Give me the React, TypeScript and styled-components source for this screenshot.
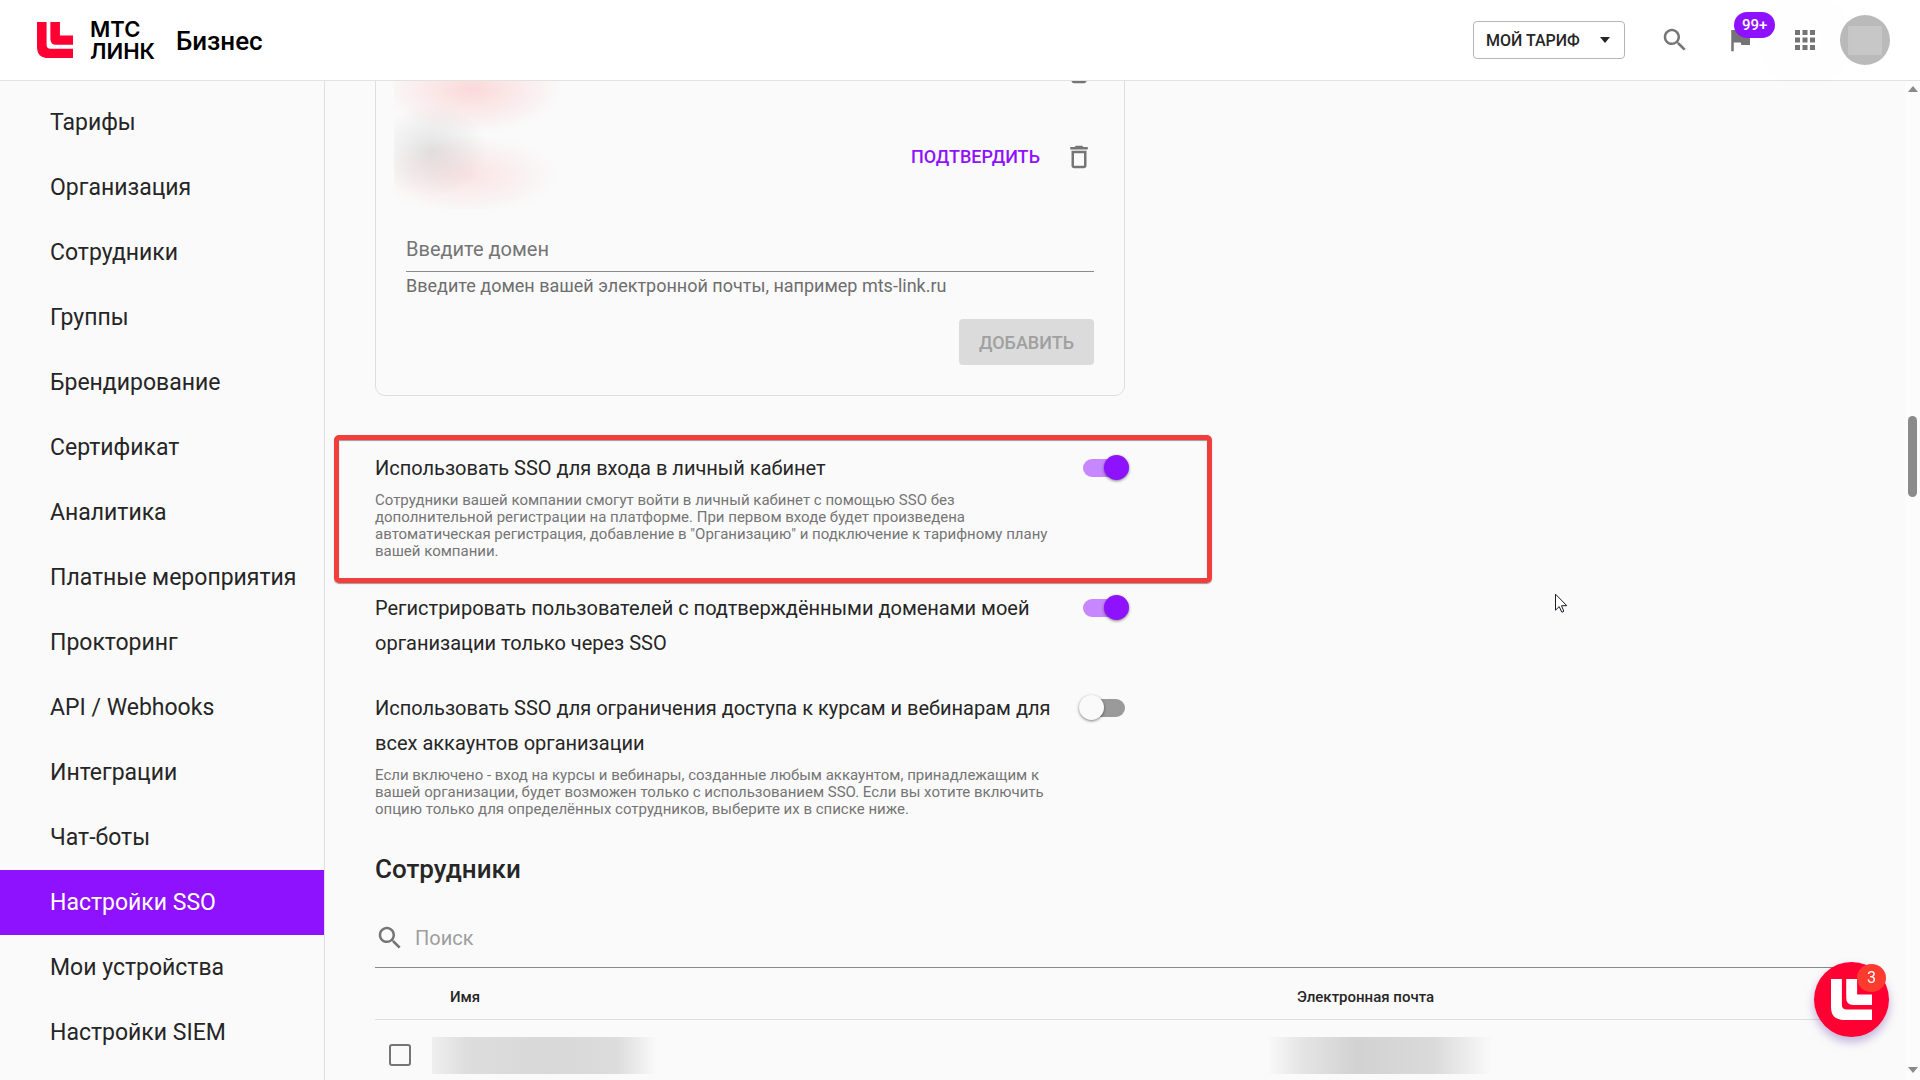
import React, { useState } from "react";
import styled, { createGlobalStyle, css } from "styled-components";

const GlobalStyle = createGlobalStyle`
  *, *::before, *::after { box-sizing: border-box; }
  body {
    margin: 0;
    background: #fafafa;
    color: #262626;
    font-family: Roboto, "Liberation Sans", sans-serif;
  }
  button, input { font-family: inherit; }
`;

const purple = "#8f12ff";
const grey = "#757575";

const Page = styled.div`
  display: flex;
  flex-direction: column;
  height: 100vh;
  overflow: hidden;
`;

/* ---------- Header ---------- */

const Header = styled.header`
  display: flex;
  flex: none;
  align-items: center;
  justify-content: space-between;
  height: 81px;
  padding: 0 30px 0 37px;
  border-bottom: 1px solid #e2e2e2;
  background: #fff;
`;

const Brand = styled.a`
  display: flex;
  align-items: center;
  gap: 17px;
  color: #000;
  text-decoration: none;
`;

const BrandName = styled.span`
  font: 600 22px/22px Inter, "Liberation Sans", sans-serif;
`;

const Product = styled.span`
  margin-left: 4px;
  padding-top: 2px;
  font-size: 26px;
  line-height: 30px;
  font-weight: 500;
`;

const Tools = styled.div`
  display: flex;
  align-items: center;
  gap: 25px;
`;

const PlanButton = styled.button`
  display: flex;
  align-items: center;
  justify-content: space-between;
  width: 152px;
  height: 38px;
  margin-right: 10px;
  padding: 0 14px 0 12px;
  border: 1px solid #b5b5b5;
  border-radius: 4px;
  background: #fff;
  color: #262626;
  font-size: 16px;
  font-weight: 500;
`;

const IconButton = styled.button<{ $halo?: boolean }>`
  position: relative;
  display: flex;
  padding: 0;
  border: 0;
  border-radius: 50%;
  background: none;
  color: ${grey};
  ${(p) => p.$halo && css`
    margin-right: -5px;
    box-shadow: 0 0 24px 28px rgba(143, 18, 255, 0.01);
  `}
`;

const FlagSlot = styled.div`
  display: flex;
  margin: 0 10px;
`;

const Counter = styled.span`
  position: absolute;
  top: -13px;
  left: 9px;
  padding: 0 8px;
  border-radius: 13px;
  background: ${purple};
  color: #fff;
  font-size: 15px;
  line-height: 26px;
  font-weight: 500;
`;

const Avatar = styled.button`
  display: grid;
  place-items: center;
  width: 50px;
  height: 50px;
  padding: 0;
  border: 0;
  border-radius: 50%;
  background: #bababa;

  &::after {
    content: "";
    width: 34px;
    height: 29px;
    background: #c7c7c7;
  }
`;

/* ---------- Body ---------- */

const Body = styled.div`
  display: flex;
  flex: 1;
  min-height: 0;
`;

const Sidebar = styled.nav`
  display: flex;
  flex: none;
  flex-direction: column;
  width: 325px;
  padding-top: 9px;
  border-right: 1px solid #e0e0e0;
`;

const NavLink = styled.a<{ $active?: boolean }>`
  flex: none;
  padding-left: 50px;
  background: ${(p) => (p.$active ? purple : "transparent")};
  color: ${(p) => (p.$active ? "#fff" : "#262626")};
  font-size: 23px;
  line-height: 65px;
  text-decoration: none;
`;

const Content = styled.main`
  flex: 1;
  min-width: 0;
  overflow: hidden;
  padding: 0 50px;
`;

const Track = styled.div`
  display: flex;
  flex: none;
  flex-direction: column;
  align-items: center;
  justify-content: space-between;
  width: 15px;
  padding: 5px 0 7px;
  background: #fcfcfc;
  color: #8a8a8a;
`;

const Thumb = styled.div`
  width: 9px;
  height: 81px;
  margin-bottom: 246px;
  border-radius: 5px;
  background: #8b8b8b;
`;

/* ---------- Domains card ---------- */

const Card = styled.section`
  max-width: 750px;
  margin-top: -63px;
  padding: 10px 30px 30px;
  border: 1px solid #dedede;
  border-radius: 10px;
`;

const DomainList = styled.ul`
  position: relative;
  margin: 0;
  padding: 0;
  list-style: none;
`;

const DomainRow = styled.li`
  display: flex;
  align-items: center;
  justify-content: flex-end;
  height: 85px;
`;

const Redacted = styled.div`
  position: absolute;
  top: 0;
  left: -12px;
  width: 200px;
  height: 180px;
  background:
    radial-gradient(56px 46px at 38px 122px, rgba(150, 150, 150, 0.24), transparent),
    radial-gradient(90px 40px at 74px 146px, rgba(255, 120, 120, 0.17), transparent),
    radial-gradient(90px 44px at 78px 60px, rgba(255, 100, 100, 0.22), transparent);
`;

const ConfirmButton = styled.button`
  margin-right: 24px;
  padding: 0;
  border: 0;
  background: none;
  color: ${purple};
  font-size: 18px;
  font-weight: 500;
`;

const DomainInput = styled.input`
  display: block;
  width: 100%;
  height: 45px;
  margin-top: 28px;
  padding: 0;
  border: 0;
  border-bottom: 1px solid #8a8a8a;
  background: none;
  font-size: 20px;

  &::placeholder { color: ${grey}; opacity: 1; }
`;

const Helper = styled.label`
  display: block;
  padding-top: 4px;
  color: #6e6e6e;
  font-size: 18px;
  line-height: 20px;
`;

const AddButton = styled.button`
  display: block;
  width: 135px;
  height: 46px;
  margin: 23px 0 0 auto;
  border: 0;
  border-radius: 4px;
  background: #dbdbdb;
  color: #a0a0a0;
  font-size: 18px;
  font-weight: 500;
`;

/* ---------- Options ---------- */

const Options = styled.section`
  display: flex;
  flex-direction: column;
  gap: 30px;
  max-width: 755px;
  padding-top: 55px;
`;

const Option = styled.div`
  position: relative;
  display: flex;
  justify-content: space-between;
`;

const OptionText = styled.div`
  width: 690px;
`;

const OptionTitle = styled.label`
  display: block;
  font-size: 20px;
  line-height: 35px;
`;

const OptionNote = styled.p`
  margin: 6px 0 1px;
  color: ${grey};
  font-size: 15px;
  line-height: 17px;
`;

const Highlight = styled.div`
  position: absolute;
  inset: -16px -82px -22px -41px;
  border: 5px solid #f23d3d;
  border-radius: 5px;
  box-shadow: 0 1px 1px #999, inset 0 1px 1px #999;
  pointer-events: none;
`;

const Switch = styled.input`
  position: relative;
  width: 42px;
  height: 18px;
  margin: 8px 5px 0 0;
  appearance: none;
  border-radius: 9px;
  background: #9a9a9a;

  &::before {
    content: "";
    position: absolute;
    top: -4px;
    left: -4px;
    width: 25px;
    height: 25px;
    border-radius: 50%;
    background: #fafafa;
    box-shadow: 0 1px 3px rgba(0, 0, 0, 0.5);
  }

  &:checked { background: #c788ff; }
  &:checked::before { left: 21px; background: ${purple}; }
`;

/* ---------- Employees ---------- */

const Heading = styled.h2`
  margin: 34px 0 0;
  font-size: 26px;
  line-height: 32px;
  font-weight: 500;
`;

const SearchField = styled.label`
  display: flex;
  align-items: center;
  gap: 10px;
  height: 60px;
  margin-top: 23px;
  border-bottom: 1px solid #8a8a8a;
  color: ${grey};
`;

const SearchInput = styled.input`
  flex: 1;
  padding: 0;
  border: 0;
  background: none;
  font-size: 20px;

  &::placeholder { color: #9e9e9e; opacity: 1; }
`;

const Table = styled.table`
  width: 100%;
  table-layout: fixed;
  border-collapse: collapse;

  col:first-child { width: 57px; }
  col:last-child { width: 576px; }
`;

const HeadCell = styled.th`
  height: 51px;
  padding: 8px 18px 0;
  border-bottom: 1px solid #dedede;
  font-size: 15px;
  font-weight: 500;
  text-align: left;
`;

const Cell = styled.td`
  height: 72px;
  padding: 0;
`;

const CheckBox = styled.input`
  display: block;
  width: 22px;
  height: 22px;
  margin: 0 0 0 14px;
  appearance: none;
  border: 2px solid ${grey};
  border-radius: 3px;
`;

const RedactedName = styled.div`
  width: 225px;
  height: 37px;
  background: linear-gradient(90deg, #efefef, #dddddd 16%, #d8d8d8 52%, #dcdcdc 82%, #fafafa);
`;

const RedactedMail = styled(RedactedName)`
  margin-left: -12px;
  background: linear-gradient(90deg, #fafafa, #e4e4e4 16%, #d2d2d2 40%, #dadada 74%, #fafafa);
`;

/* ---------- Floating chat ---------- */

const ChatButton = styled.button`
  position: fixed;
  right: 31px;
  bottom: 43px;
  display: grid;
  place-items: center;
  width: 75px;
  height: 75px;
  padding: 0;
  border: 0;
  border-radius: 50%;
  background: #ff0032;
  color: #fff;
  box-shadow: 0 5px 10px rgba(90, 40, 160, 0.35);
`;

const ChatCount = styled.span`
  position: absolute;
  top: 2px;
  right: 3px;
  width: 29px;
  border-radius: 50%;
  background: #ff3b30;
  font-size: 16px;
  line-height: 28px;
`;

const Pointer = styled.svg`
  position: fixed;
  top: 593px;
  left: 1554px;
  pointer-events: none;
`;

/* ---------- Drawings ---------- */

const LinkMark = ({ size, color }: { size: number; color: string }) => (
  <svg width={size} height={size} viewBox="0 0 35 35" fill={color} aria-hidden="true">
    <path d="M0 0h9.3v22q0 4 4 4H35v9H11Q0 35 0 24z" />
    <path d="M13 0h9.3v13.2H35v9H19q-6 0-6-6z" />
  </svg>
);

const paths = {
  search:
    "M15.5 14h-.79l-.28-.27C15.41 12.59 16 11.11 16 9.5 16 5.91 13.09 3 9.5 3S3 5.91 3 9.5 5.91 16 9.5 16c1.61 0 3.09-.59 4.23-1.57l.27.28v.79l5 4.99L20.49 19l-4.99-5zm-6 0C7.01 14 5 11.99 5 9.5S7.01 5 9.5 5 14 7.01 14 9.5 11.99 14 9.5 14z",
  flag: "M14.4 6L14 4H5v17h2v-7h5.6l.4 2h7V6z",
  apps:
    "M4 8h4V4H4v4zm6 12h4v-4h-4v4zm-6 0h4v-4H4v4zm0-6h4v-4H4v4zm6 0h4v-4h-4v4zm6-10v4h4V4h-4zm-6 4h4V4h-4v4zm6 6h4v-4h-4v4zm0 6h4v-4h-4v4z",
  trash:
    "M6 19c0 1.1.9 2 2 2h8c1.1 0 2-.9 2-2V7H6v12zM8 9h8v10H8V9zm7.5-5l-1-1h-5l-1 1H5v2h14V4z",
};

const Icon = ({ name }: { name: keyof typeof paths }) => (
  <svg width="30" height="30" viewBox="0 0 24 24" fill="currentColor" aria-hidden="true">
    <path d={paths[name]} />
  </svg>
);

const Triangle = ({ up, width = 10, height = 6 }: { up?: boolean; width?: number; height?: number }) => (
  <svg width={width} height={height} viewBox="0 0 10 6" fill="currentColor" aria-hidden="true">
    <path d={up ? "M0 6L5 0l5 6z" : "M0 0l5 6 5-6z"} />
  </svg>
);

/* ---------- Content data ---------- */

const sections = [
  "Тарифы", "Организация", "Сотрудники", "Группы", "Брендирование", "Сертификат",
  "Аналитика", "Платные мероприятия", "Прокторинг", "API / Webhooks", "Интеграции",
  "Чат-боты", "Настройки SSO", "Мои устройства", "Настройки SIEM",
];

const options = [
  {
    id: "sso-login",
    title: "Использовать SSO для входа в личный кабинет",
    note:
      "Сотрудники вашей компании смогут войти в личный кабинет с помощью SSO без дополнительной регистрации на платформе. При первом входе будет произведена автоматическая регистрация, добавление в \"Организацию\" и подключение к тарифному плану вашей компании.",
    on: true,
    highlighted: true,
  },
  {
    id: "sso-register",
    title: "Регистрировать пользователей с подтверждёнными доменами моей организации только через SSO",
    on: true,
  },
  {
    id: "sso-restrict",
    title: "Использовать SSO для ограничения доступа к курсам и вебинарам для всех аккаунтов организации",
    note:
      "Если включено - вход на курсы и вебинары, созданные любым аккаунтом, принадлежащим к вашей организации, будет возможен только с использованием SSO. Если вы хотите включить опцию только для определённых сотрудников, выберите их в списке ниже.",
    on: false,
  },
];

export default function App() {
  const [enabled, setEnabled] = useState(options.map((o) => o.on));
  const toggle = (i: number) => setEnabled(enabled.map((v, k) => (k === i ? !v : v)));

  return (
    <Page>
      <GlobalStyle />
      <Header>
        <Brand href="#">
          <LinkMark size={36} color="#ff0032" />
          <BrandName>МТС<br />ЛИНК</BrandName>
          <Product>Бизнес</Product>
        </Brand>
        <Tools>
          <PlanButton>МОЙ ТАРИФ <Triangle /></PlanButton>
          <IconButton aria-label="Поиск"><Icon name="search" /></IconButton>
          <FlagSlot>
            <IconButton aria-label="Уведомления"><Icon name="flag" /><Counter>99+</Counter></IconButton>
          </FlagSlot>
          <IconButton $halo aria-label="Приложения"><Icon name="apps" /></IconButton>
          <Avatar aria-label="Профиль" />
        </Tools>
      </Header>

      <Body>
        <Sidebar>
          {sections.map((s) => (
            <NavLink key={s} href="#" $active={s === "Настройки SSO"}>{s}</NavLink>
          ))}
        </Sidebar>

        <Content>
          <Card>
            <DomainList>
              <DomainRow>
                <IconButton aria-label="Удалить"><Icon name="trash" /></IconButton>
              </DomainRow>
              <DomainRow>
                <ConfirmButton>ПОДТВЕРДИТЬ</ConfirmButton>
                <IconButton aria-label="Удалить"><Icon name="trash" /></IconButton>
              </DomainRow>
              <Redacted as="li" aria-hidden="true" />
            </DomainList>
            <DomainInput id="domain" placeholder="Введите домен" />
            <Helper htmlFor="domain">Введите домен вашей электронной почты, например mts-link.ru</Helper>
            <AddButton disabled>ДОБАВИТЬ</AddButton>
          </Card>

          <Options>
            {options.map((o, i) => (
              <Option key={o.id}>
                <OptionText>
                  <OptionTitle htmlFor={o.id}>{o.title}</OptionTitle>
                  {o.note && <OptionNote>{o.note}</OptionNote>}
                </OptionText>
                <Switch id={o.id} type="checkbox" checked={enabled[i]} onChange={() => toggle(i)} />
                {o.highlighted && <Highlight />}
              </Option>
            ))}
          </Options>

          <Heading>Сотрудники</Heading>
          <SearchField>
            <Icon name="search" />
            <SearchInput placeholder="Поиск" aria-label="Поиск" />
          </SearchField>
          <Table>
            <colgroup><col /><col /><col /></colgroup>
            <thead>
              <tr>
                <HeadCell />
                <HeadCell>Имя</HeadCell>
                <HeadCell>Электронная почта</HeadCell>
              </tr>
            </thead>
            <tbody>
              <tr>
                <Cell><CheckBox type="checkbox" aria-label="Выбрать сотрудника" /></Cell>
                <Cell><RedactedName /></Cell>
                <Cell><RedactedMail /></Cell>
              </tr>
            </tbody>
          </Table>
        </Content>

        <Track>
          <Triangle up />
          <Thumb />
          <Triangle />
        </Track>
      </Body>

      <ChatButton aria-label="Чат">
        <LinkMark size={41} color="#fff" />
        <ChatCount>3</ChatCount>
      </ChatButton>

      <Pointer width="14" height="21" viewBox="0 0 14 21" fill="#fff" stroke="#1c1c28" aria-hidden="true">
        <path d="M1.5 1.2v16l3.7-3.6 2.5 5.4q1.6.5 2-1L7.5 12.7H12.8z" />
      </Pointer>
    </Page>
  );
}
